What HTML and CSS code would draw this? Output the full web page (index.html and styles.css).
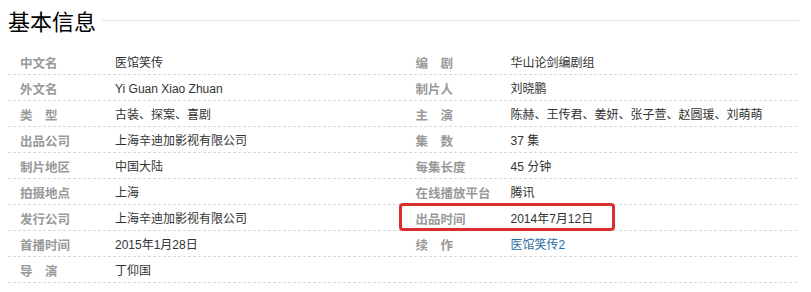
FILE: index.html
```html
<!DOCTYPE html>
<html lang="zh-CN">
<head>
<meta charset="utf-8">
<link rel="stylesheet" href="styles.css">
</head>
<body>
<div class="card">
  <div class="title-bar">
    <h2 class="title">基本信息</h2>
    <span class="title-line"></span>
  </div>
  <div class="info">
    <dl class="col">
      <div class="row"><dt>中文名</dt><dd>医馆笑传</dd></div>
      <div class="row"><dt>外文名</dt><dd>Yi Guan Xiao Zhuan</dd></div>
      <div class="row"><dt>类&emsp;型</dt><dd>古装、探案、喜剧</dd></div>
      <div class="row"><dt>出品公司</dt><dd>上海辛迪加影视有限公司</dd></div>
      <div class="row"><dt>制片地区</dt><dd>中国大陆</dd></div>
      <div class="row"><dt>拍摄地点</dt><dd>上海</dd></div>
      <div class="row"><dt>发行公司</dt><dd>上海辛迪加影视有限公司</dd></div>
      <div class="row"><dt>首播时间</dt><dd>2015年1月28日</dd></div>
      <div class="row"><dt>导&emsp;演</dt><dd>丁仰国</dd></div>
    </dl>
    <dl class="col">
      <div class="row"><dt>编&emsp;剧</dt><dd>华山论剑编剧组</dd></div>
      <div class="row"><dt>制片人</dt><dd>刘晓鹏</dd></div>
      <div class="row"><dt>主&emsp;演</dt><dd>陈赫、王传君、姜妍、张子萱、赵圆瑗、刘萌萌</dd></div>
      <div class="row"><dt>集&emsp;数</dt><dd>37 集</dd></div>
      <div class="row"><dt>每集长度</dt><dd>45 分钟</dd></div>
      <div class="row"><dt>在线播放平台</dt><dd>腾讯</dd></div>
      <div class="row marked"><dt>出品时间</dt><dd>2014年7月12日</dd></div>
      <div class="row"><dt>续&emsp;作</dt><dd><a class="link" href="#">医馆笑传2</a></dd></div>
      <div class="row"><dt></dt><dd></dd></div>
    </dl>
  </div>
</div>
</body>
</html>
```

FILE: styles.css
```css
html, body {
  margin: 0;
  padding: 0;
  background: #fff;
}

body {
  font-family: Arial, "Liberation Sans", "Noto Sans CJK SC", sans-serif;
  color: #333;
}

.card {
  width: 791px;
  padding: 5px 0 0 8px;
}

.title-bar {
  display: flex;
  align-items: center;
  height: 30px;
  margin-bottom: 14px;
}

.title {
  margin: 0;
  font-size: 22px;
  line-height: 30px;
  font-weight: normal;
  color: #000;
  font-family: "Noto Sans CJK SC", sans-serif;
}

.title-line {
  flex: 1;
  height: 1px;
  margin-left: 6px;
  background: #e3e3e3;
}

.info {
  display: grid;
  grid-template-columns: 1fr 1fr;
}

.col {
  margin: 0;
}

.row {
  position: relative;
  display: flex;
  height: 22px;
  padding-top: 3px;
  padding-bottom: 1px;
  padding-left: 12px;
  background: linear-gradient(to right, #d9d9d9 3px, transparent 3px) left bottom / 5px 1px repeat-x;
}

.row dt,
.row dd {
  margin: 0;
  line-height: 22px;
  height: 22px;
  white-space: nowrap;
}

.row dt {
  width: 95px;
  flex: none;
  font-size: 12.5px;
  font-weight: bold;
  color: #999;
  font-family: "Noto Sans CJK SC", sans-serif;
}

.row dd {
  font-size: 12px;
  color: #333;
  font-family: Arial, "Liberation Sans", "Noto Sans CJK SC", sans-serif;
}

.link {
  color: #2b6c9e;
  text-decoration: none;
}

.marked::after {
  content: "";
  position: absolute;
  left: -5px;
  top: -2px;
  width: 216px;
  height: 28px;
  box-sizing: border-box;
  border: 3px solid #d7302c;
  border-radius: 4px;
}
```
